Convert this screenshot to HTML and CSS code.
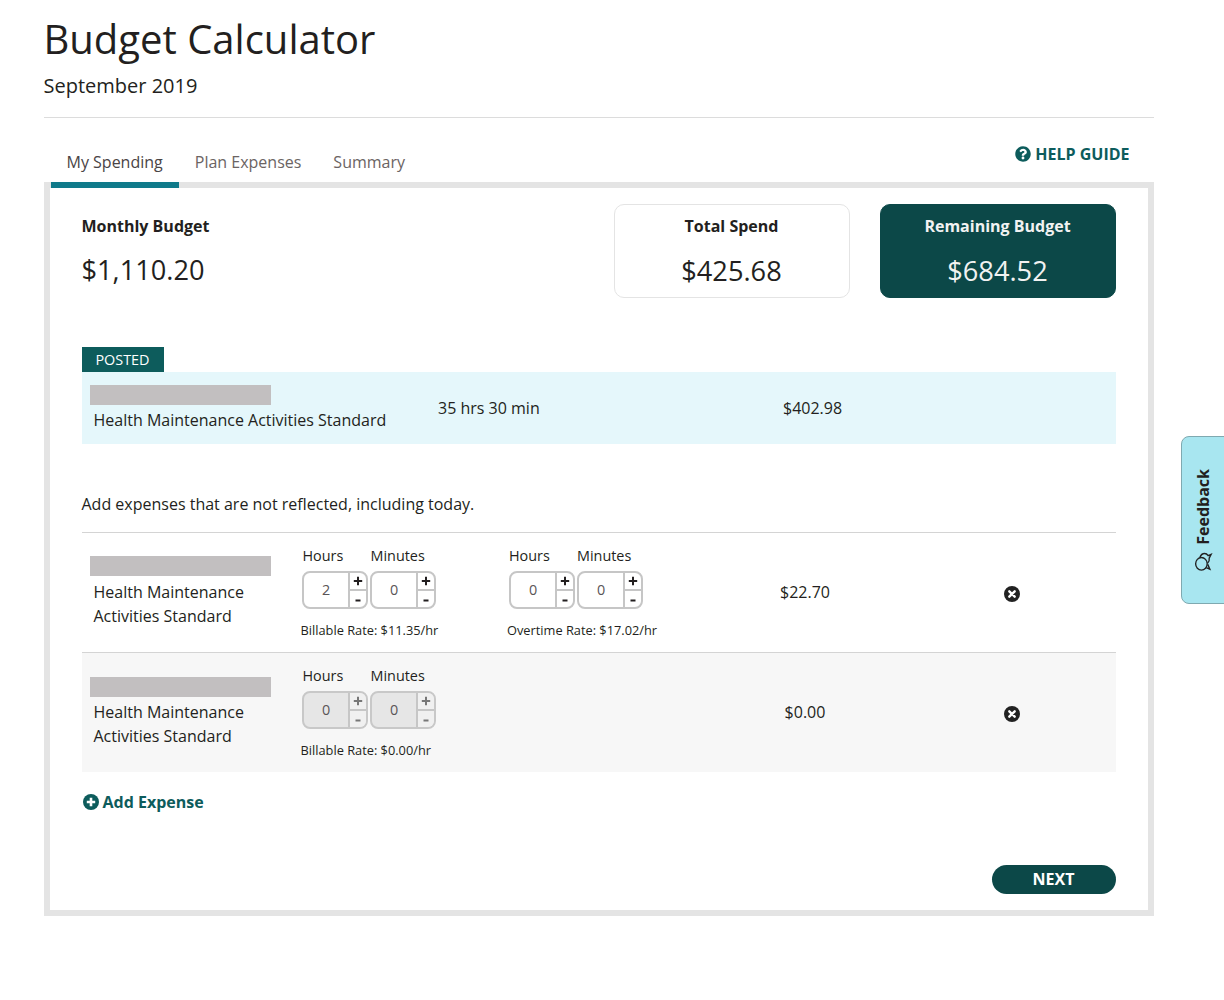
FILE: index.html
```html
<!DOCTYPE html>
<html lang="en">
<head>
<meta charset="utf-8">
<title>Budget Calculator</title>
<link rel="stylesheet" href="styles.css">
</head>
<body>
<svg class="sprites" width="0" height="0" aria-hidden="true">
  <symbol id="i-plus" viewBox="0 0 10 10"><path d="M5 .8v8.400M.8 5h8.400" stroke="currentColor" stroke-width="2"/></symbol>
  <symbol id="i-minus" viewBox="0 0 10 10"><path d="M2.500 6.500h5" stroke="currentColor" stroke-width="2"/></symbol>
  <symbol id="i-remove" viewBox="0 0 16 16"><circle cx="8" cy="8" r="8" fill="#222"/><path d="M5.300 5.300l5.400 5.400M10.700 5.300l-5.400 5.400" stroke="#fff" stroke-width="2.400" stroke-linecap="round"/></symbol>
</svg>
<main class="page">
  <h1 class="title">Budget Calculator</h1>
  <p class="subtitle">September 2019</p>
  <nav class="tabs">
    <a class="tab tab-active">My Spending</a>
    <a class="tab">Plan Expenses</a>
    <a class="tab">Summary</a>
    <a class="help">
      <svg class="help-icon" viewBox="0 0 512 512"><path fill="#0d5c5c" d="M504 256c0 137-111 248-248 248S8 393 8 256 119 8 256 8s248 111 248 248zM262.700 90c-54.500 0-89.300 23-116.500 63.800-3.500 5.300-2.400 12.400 2.700 16.300l34.700 26.300c5.200 3.900 12.600 3 16.700-2.100 17.900-22.700 30.100-35.800 57.300-35.800 20.400 0 45.700 13.100 45.700 32.900 0 15-12.400 22.700-32.500 34-23.500 13.200-54.600 29.600-54.600 70.600V300c0 6.600 5.400 12 12 12h56c6.600 0 12-5.400 12-12v-1.300c0-28.400 83-29.600 83-106.500C380 134.200 319.800 90 262.700 90zM256 338c-25.400 0-46 20.600-46 46 0 25.400 20.600 46 46 46s46-20.600 46-46c0-25.400-20.600-46-46-46z"/></svg>
      HELP GUIDE
    </a>
  </nav>
  <section class="panel">
    <div class="summary">
      <div class="budget">
        <div class="stat-label">Monthly Budget</div>
        <div class="stat-value">$1,110.20</div>
      </div>
      <div class="card">
        <div class="stat-label">Total Spend</div>
        <div class="stat-value">$425.68</div>
      </div>
      <div class="card card-dark">
        <div class="stat-label">Remaining Budget</div>
        <div class="stat-value">$684.52</div>
      </div>
    </div>

    <div class="tag">POSTED</div>
    <div class="posted">
      <div class="posted-name">
        <div class="redact"></div>
        <div class="name">Health Maintenance Activities Standard</div>
      </div>
      <div class="posted-time">35 hrs 30 min</div>
      <div class="posted-amount">$402.98</div>
    </div>

    <p class="note">Add expenses that are not reflected, including today.</p>

    <div class="row">
      <div class="row-name">
        <div class="redact"></div>
        <div class="name">Health Maintenance<br>Activities Standard</div>
      </div>
      <div class="group">
        <div class="labels"><span class="label">Hours</span><span class="label">Minutes</span></div>
        <div class="spinners">
          <div class="spinner"><span class="spin-value">2</span><div class="spin-btns"><span class="spin-btn"><svg class="spin-icon"><use href="#i-plus"/></svg></span><span class="spin-btn"><svg class="spin-icon"><use href="#i-minus"/></svg></span></div></div>
          <div class="spinner"><span class="spin-value">0</span><div class="spin-btns"><span class="spin-btn"><svg class="spin-icon"><use href="#i-plus"/></svg></span><span class="spin-btn"><svg class="spin-icon"><use href="#i-minus"/></svg></span></div></div>
        </div>
        <div class="rate">Billable Rate: $11.35/hr</div>
      </div>
      <div class="group group-overtime">
        <div class="labels"><span class="label">Hours</span><span class="label">Minutes</span></div>
        <div class="spinners">
          <div class="spinner"><span class="spin-value">0</span><div class="spin-btns"><span class="spin-btn"><svg class="spin-icon"><use href="#i-plus"/></svg></span><span class="spin-btn"><svg class="spin-icon"><use href="#i-minus"/></svg></span></div></div>
          <div class="spinner"><span class="spin-value">0</span><div class="spin-btns"><span class="spin-btn"><svg class="spin-icon"><use href="#i-plus"/></svg></span><span class="spin-btn"><svg class="spin-icon"><use href="#i-minus"/></svg></span></div></div>
        </div>
        <div class="rate">Overtime Rate: $17.02/hr</div>
      </div>
      <div class="amount">$22.70</div>
      <div class="remove"><svg class="remove-icon"><use href="#i-remove"/></svg></div>
    </div>

    <div class="row row-alt">
      <div class="row-name">
        <div class="redact"></div>
        <div class="name">Health Maintenance<br>Activities Standard</div>
      </div>
      <div class="group">
        <div class="labels"><span class="label">Hours</span><span class="label">Minutes</span></div>
        <div class="spinners">
          <div class="spinner spinner-off"><span class="spin-value">0</span><div class="spin-btns"><span class="spin-btn"><svg class="spin-icon"><use href="#i-plus"/></svg></span><span class="spin-btn"><svg class="spin-icon"><use href="#i-minus"/></svg></span></div></div>
          <div class="spinner spinner-off"><span class="spin-value">0</span><div class="spin-btns"><span class="spin-btn"><svg class="spin-icon"><use href="#i-plus"/></svg></span><span class="spin-btn"><svg class="spin-icon"><use href="#i-minus"/></svg></span></div></div>
        </div>
        <div class="rate">Billable Rate: $0.00/hr</div>
      </div>
      <div class="group"></div>
      <div class="amount">$0.00</div>
      <div class="remove"><svg class="remove-icon"><use href="#i-remove"/></svg></div>
    </div>

    <a class="add">
      <svg class="add-icon" viewBox="0 0 16 16"><circle cx="8" cy="8" r="8" fill="#0d5c5c"/><path d="M8 3.800v8.400M3.800 8h8.400" stroke="#fff" stroke-width="2.600"/></svg>
      Add Expense
    </a>
    <div class="actions"><button class="next">NEXT</button></div>
  </section>
</main>
<aside class="feedback">
  <span class="feedback-inner">
    <svg class="feedback-icon" viewBox="0 0 19 19" fill="none" stroke="#222" stroke-width="1.300"><ellipse cx="7.500" cy="8" rx="6" ry="5.500"/><path d="M4 12.500l-1.500 3.500 4.500-2"/><path d="M13.500 6.500c2.200.8 3.800 2.500 3.800 4.500 0 1.400-.8 2.600-2 3.400l1.200 2.800-3.500-1.800c-1.800.3-3.800-.3-5-1.600"/></svg>
    Feedback
  </span>
</aside>
</body>
</html>
```

FILE: styles.css
```css
* { box-sizing: border-box; }
html, body { margin: 0; padding: 0; }
body {
  font-family: "Open Sans", sans-serif;
  color: #231f20;
  background: #fff;
  font-size: 16px;
  height: 1000px;
  overflow: hidden;
  position: relative;
}
.sprites { position: absolute; }
.page {
  width: 1110px;
  margin-left: 43.500px;
  padding-top: 11px;
}
.title {
  margin: 0;
  font-size: 40px;
  line-height: 56px;
  font-weight: 400;
}
.subtitle {
  margin: 4px 0 0;
  font-size: 20px;
  line-height: 30px;
  padding-bottom: 16px;
  border-bottom: 1px solid #dcdcdc;
}
.tabs {
  display: flex;
  align-items: stretch;
  height: 64px;
  padding-left: 7px;
  position: relative;
  z-index: 1;
}
.tab {
  display: block;
  padding: 32px 16px 0;
  font-size: 16px;
  line-height: 24px;
  color: #6b6463;
  border-bottom: 6px solid transparent;
  height: 70px;
}
.tab-active {
  color: #4a4445;
  border-bottom-color: #0f7a8a;
}
.help {
  margin-left: auto;
  margin-right: 24px;
  padding-top: 24px;
  display: flex;
  align-items: flex-start;
  gap: 4px;
  font-weight: 700;
  font-size: 16px;
  line-height: 24px;
  color: #0d5c5c;
}
.help-icon {
  width: 16px;
  height: 16px;
  margin-top: 4px;
}
.panel {
  border: 6px solid #e4e4e4;
  height: 734px;
  padding: 16px 32px 0;
}
.summary {
  display: flex;
  height: 94px;
  gap: 30px;
}
.budget {
  flex: 1;
  padding-top: 10px;
}
.card {
  width: 236px;
  border: 1px solid #e4e4e4;
  border-radius: 10px;
  text-align: center;
  padding-top: 9px;
}
.card-dark {
  background: #0c4848;
  border-color: #0c4848;
  color: #f2f2f2;
}
.stat-label {
  font-weight: 700;
  font-size: 16px;
  line-height: 24px;
}
.budget .stat-value { margin-top: 14px; }
.stat-value {
  margin-top: 15px;
  font-size: 27.200px;
  line-height: 36px;
}
.tag {
  margin-top: 49px;
  width: 82px;
  height: 25px;
  background: #0d5c5c;
  color: #fff;
  font-size: 14.400px;
  line-height: 26px;
  text-align: center;
}
.posted {
  display: flex;
  height: 72px;
  background: #e5f7fb;
}
.redact {
  width: 181px;
  height: 20px;
  background: #c2bfc0;
}
.posted-name {
  width: 356.500px;
  padding: 13px 0 0 8px;
}
.name {
  margin: 4px 0 0 4px;
  font-size: 16px;
  line-height: 24px;
  white-space: nowrap;
}
.posted-name .name { margin-top: 3px; }
.row-alt .name { margin-top: 3px; }
.posted-time {
  width: 345px;
  padding-top: 24px;
  line-height: 24px;
}
.posted-amount {
  padding-top: 24px;
  line-height: 24px;
}
.note {
  margin: 48px 0 0;
  line-height: 24px;
  padding-bottom: 16px;
  border-bottom: 1px solid #d4d4d4;
}
.row {
  display: flex;
  height: 119px;
  padding: 0 0 0 8px;
}
.row-alt {
  background: #f7f7f7;
  border-top: 1px solid #d4d4d4;
  height: 120px;
}
.row-name {
  width: 211px;
  padding-top: 23px;
}
.row-alt .row-name { padding-top: 24px; }
.group {
  width: 206px;
  padding-top: 12px;
}
.labels {
  display: flex;
  padding-left: 2px;
  font-size: 14.400px;
  line-height: 22px;
}
.label { width: 68px; }
.spinners {
  display: flex;
  gap: 2px;
  margin: 4px 0 0 1px;
}
.group-overtime { padding-left: .5px; }
.group-overtime .spinners { margin-left: 1.500px; }
.spinner {
  display: flex;
  width: 66px;
  height: 38px;
  border: 2px solid #c6c6c6;
  border-radius: 8px;
  background: #fff;
  font-size: 14.400px;
  color: #5a5556;
  overflow: hidden;
}
.spin-value {
  flex: 1;
  padding-left: 1px;
  text-align: center;
  line-height: 34px;
}
.spin-btns {
  width: 18px;
  display: flex;
  flex-direction: column;
  border-left: 2px solid #c6c6c6;
}
.spin-btn {
  flex: 1;
  display: flex;
  align-items: center;
  justify-content: center;
  color: #231f20;
}
.spin-btn + .spin-btn { border-top: 2px solid #c6c6c6; }
.spin-icon {
  display: block;
  width: 10px;
  height: 10px;
}
.spinner-off { background: #e6e6e6; border-color: #c8c8c8; }
.spinner-off .spin-btns { background: #f0f0f0; }
.spinner-off .spin-btn { color: #777; }
.rate {
  margin-top: 11px;
  font-size: 12.800px;
  line-height: 20px;
}
.amount {
  width: 185px;
  text-align: center;
  padding-top: 47px;
  line-height: 24px;
}
.remove {
  padding: 53px 0 0 106px;
}
.remove-icon {
  display: block;
  width: 16px;
  height: 16px;
}
.add {
  display: flex;
  align-items: center;
  gap: 4px;
  margin: 18px 0 0 1px;
  height: 24px;
  font-weight: 700;
  color: #0d5c5c;
  line-height: 24px;
}
.add-icon { width: 16px; height: 16px; }
.actions {
  display: flex;
  justify-content: flex-end;
  margin-top: 51px;
}
.next {
  width: 124px;
  height: 29px;
  border: 0;
  border-radius: 15px;
  background: #0c4848;
  color: #fff;
  font-family: inherit;
  font-size: 16px;
  line-height: 27px;
  font-weight: 700;
  padding: 0 0 1px;
}
.feedback {
  position: absolute;
  left: 1181px;
  top: 436px;
  width: 60px;
  height: 168px;
  background: #a8e6f0;
  border: 1px solid #7fa9b0;
  border-radius: 8px;
  display: flex;
  justify-content: flex-start;
  align-items: center;
}
.feedback-inner {
  writing-mode: vertical-rl;
  transform: rotate(180deg);
  display: flex;
  align-items: center;
  gap: 7px;
  font-weight: 700;
  font-size: 16px;
  line-height: 22px;
  color: #231f20;
  margin-left: 10px;
}
.feedback-icon {
  width: 20px;
  height: 20px;
  transform: rotate(90deg);
}
```
